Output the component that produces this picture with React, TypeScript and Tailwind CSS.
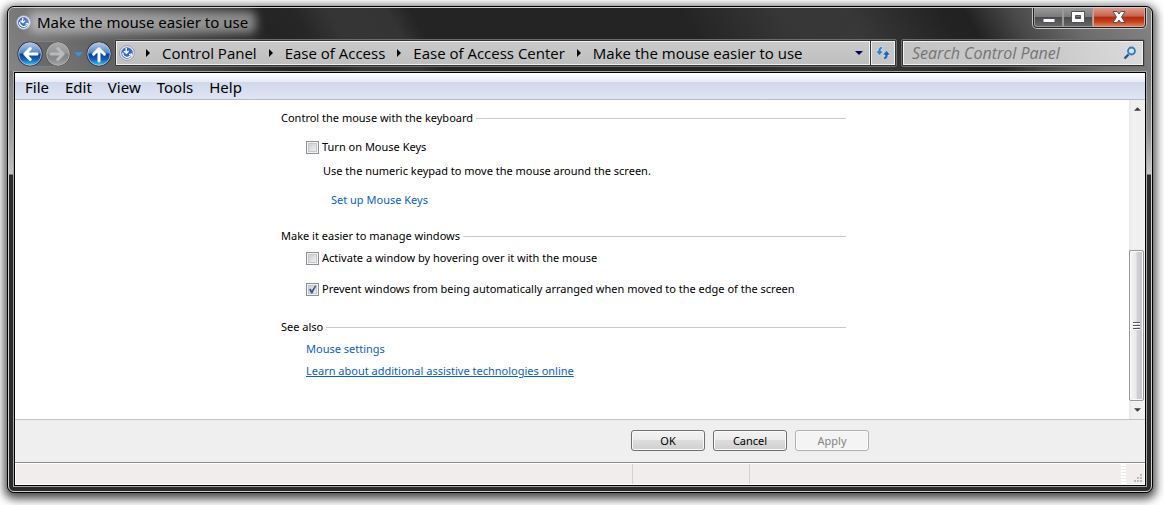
import React from "react";

const crumbs = ["Control Panel", "Ease of Access", "Ease of Access Center", "Make the mouse easier to use"];
const menus = ["File", "Edit", "View", "Tools", "Help"];

function EaseIcon({ className }: { className: string }) {
  return (
    <svg viewBox="0 0 16 16" className={className} aria-hidden="true">
      <circle cx="8" cy="8" r="7.4" fill="#e6eaf6" stroke="#8f9096" strokeWidth=".8" />
      <circle cx="8" cy="8" r="5.8" fill="#3a68d2" />
      <path d="M3.8 7.6a4.4 4.4 0 0 0 8 2.8" fill="none" stroke="#fff" strokeWidth="1.3" />
      <path d="M7.2 3v5M4.8 6l2.6 2.2L9.6 6" fill="none" stroke="#fff" strokeWidth="1.4" />
      <path d="M10 9.6l2.6-.6.3 2.4" fill="none" stroke="#fff" strokeWidth="1.2" />
    </svg>
  );
}

function Orb({ kind }: { kind: "back" | "forward" | "up" }) {
  const off = kind === "forward";
  const turn = kind === "back" ? "rotate(180 13 13)" : kind === "up" ? "rotate(-90 13 13)" : undefined;
  return (
    <svg viewBox="0 0 26 26" className="size-[26px]" aria-hidden="true">
      <defs>
        <linearGradient id={`orb-${kind}`} x1="0" y1="0" x2="0" y2="1">
          <stop offset="0" stopColor={off ? "#a8a9ab" : "#b4c9e8"} />
          <stop offset=".46" stopColor={off ? "#949698" : "#5285ca"} />
          <stop offset=".5" stopColor={off ? "#7f8183" : "#0b3f94"} />
          <stop offset=".75" stopColor={off ? "#8a8c8f" : "#1263c0"} />
          <stop offset="1" stopColor={off ? "#a5a6a8" : "#3fc4f5"} />
        </linearGradient>
      </defs>
      <circle cx="13" cy="13" r="12.5" fill={off ? "#5a5a5a" : "#2c3038"} />
      <circle cx="13" cy="13" r="11.3" fill={`url(#orb-${kind})`} stroke={off ? "#b4b5b6" : "#b9c6dc"} strokeWidth=".9" />
      <path
        transform={turn}
        d="M6 13h12M12.8 7.6l5.4 5.4-5.4 5.4"
        fill="none"
        stroke={off ? "#b9babb" : "#fff"}
        strokeWidth="3"
        strokeLinecap="round"
        strokeLinejoin="round"
      />
    </svg>
  );
}

function RightTri() {
  return (
    <svg viewBox="0 0 4 8" className="h-2 w-1 shrink-0" aria-hidden="true">
      <path d="M0 0l4 4-4 4z" fill="#000" />
    </svg>
  );
}

function DownTri({ fill, className }: { fill: string; className: string }) {
  return (
    <svg viewBox="0 0 8 4" className={className} aria-hidden="true">
      <path d="M0 0h8L4 4z" fill={fill} />
    </svg>
  );
}

function SectionTitle({ children }: { children: React.ReactNode }) {
  return (
    <h2 className="flex items-center gap-[3px]">
      {children}
      <span className="h-px flex-1 bg-[#cacaca]" />
    </h2>
  );
}

function Check({ id, label, checked }: { id: string; label: string; checked?: boolean }) {
  return (
    <div className="flex items-center gap-[3px] pl-[25px]">
      <span className="grid size-[13px]">
        <input
          id={id}
          type="checkbox"
          defaultChecked={checked}
          className="peer col-start-1 row-start-1 size-[13px] appearance-none border border-[#8e8f8f] bg-linear-to-br from-[#c4c8cd] to-[#f6f6f6] shadow-[inset_0_0_0_1px_#f4f4f4,inset_0_0_0_2px_#c3c6ca]"
        />
        <svg viewBox="0 0 13 13" className="pointer-events-none invisible col-start-1 row-start-1 size-[13px] peer-checked:visible" aria-hidden="true">
          <path d="M3 6.4l1.6-.8 1.2 2L9 2.4l1.3.5L6.4 10.6H5.3z" fill="#3f5596" />
        </svg>
      </span>
      <label htmlFor={id}>{label}</label>
    </div>
  );
}

function DialogButton({ label, disabled }: { label: string; disabled?: boolean }) {
  return (
    <button
      type="button"
      disabled={disabled}
      className="flex h-[21px] w-[74px] items-center justify-center rounded-[3px] border border-[#707070] bg-[linear-gradient(#f2f2f2,#ebebeb_50%,#dddddd_50%,#cfcfcf)] shadow-[inset_0_0_0_1px_#fafafa] disabled:border-[#adb2b5] disabled:bg-[#f4f4f4] disabled:bg-none disabled:text-[#838383]"
    >
      {label}
    </button>
  );
}

export default function App() {
  return (
    <div className="flex min-h-screen flex-col bg-white pt-[6px] pr-[11px] pb-[12px] pl-[7px] font-['Noto_Sans','Open_Sans',sans-serif] text-black">
      <div className="flex flex-1 flex-col rounded-[7px] border border-black bg-[#2b2b2b] shadow-[0_3px_10px_3px_rgba(0,0,0,0.7)]">
        <div className="flex flex-1 flex-col rounded-[6px] border border-[#cfcfcf] bg-[linear-gradient(#8d8d8d,#777_60px,#9a9a9a_120px,#c2c2c2_166px,transparent_167px),linear-gradient(#858585,#777_60px,#8d8d8d_120px,#c8c8c8_166px,transparent_167px)] bg-[length:4px_100%,4px_100%] bg-[position:left_top,right_top] bg-no-repeat">
          <header className="rounded-t-[5px] bg-[linear-gradient(60deg,#858585_0,#6f6f6f_6%,#555_12%,#343434_20%,#242424_24%,#262626_27%,#353535_30%,#343434_35%,#242424_37%,#242424_60%,#363636_68%,#383838_74%,#232323_82%,#222_84%,#484848_88%,#6c6c6c_93%,#858585_100%)] px-[4px]">
            <div className="flex h-[31px] items-start">
              <div className="flex h-[28px] flex-1 items-center gap-[6px] pl-[3px]">
                <EaseIcon className="size-[15px]" />
                <h1 className="relative isolate text-[15px] leading-[22px]">
                  <span className="absolute -inset-x-2 inset-y-0 -z-10 rounded-[6px] bg-white/45 blur-[5px]" />
                  Make the mouse easier to use
                </h1>
              </div>
              <div className="flex h-[21px] rounded-b-[5px] border border-t-0 border-[#c4c4c4] bg-[#222] px-px pb-px">
                <button type="button" aria-label="Minimize" className="flex w-[29px] items-center justify-center rounded-bl-[3px] border border-t-0 border-[#9a9a9a] bg-[linear-gradient(#999,#7b7b7b_48%,#4a4a4a_50%,#666)]">
                  <svg viewBox="0 0 14 12" className="h-3 w-[14px] shrink-0" aria-hidden="true">
                    <rect x="1" y="7.5" width="12" height="4" fill="#fff" stroke="#51535c" />
                  </svg>
                </button>
                <button type="button" aria-label="Restore" className="flex w-[30px] items-center justify-center border border-t-0 border-[#9a9a9a] bg-[linear-gradient(#999,#7b7b7b_48%,#4a4a4a_50%,#666)]">
                  <svg viewBox="0 0 14 12" className="h-3 w-[14px] shrink-0" aria-hidden="true">
                    <path fillRule="evenodd" d="M.5.5h13v11H.5zM4.500 4.500h5v3h-5z" fill="#fff" stroke="#51535c" />
                  </svg>
                </button>
                <button type="button" aria-label="Close" className="flex w-[52px] items-center justify-center rounded-br-[3px] border border-t-0 border-[#d6a398] bg-[linear-gradient(#dd9c8c,#c8604b_46%,#b02a12_50%,#c2401c_75%,#dd7a52)]">
                  <svg viewBox="0 0 14 12" className="h-3 w-[14px] shrink-0" aria-hidden="true">
                    <path d="M1 .5h4.200L7 3 8.800.5H13L9.500 6l3.500 5.500H8.800L7 9l-1.800 2.500H1L4.500 6z" fill="#fff" stroke="#51535c" />
                  </svg>
                </button>
              </div>
            </div>

            <div className="flex h-[32px] items-start gap-[4px] pr-[2px]">
              <div className="flex h-[30px] items-center pl-[4px]">
                <div className="flex h-[26px] gap-[2px] rounded-full border-y border-[#8a8a8a]/70 bg-[#606060]/60">
                  <button type="button" aria-label="Back" className="-my-px"><Orb kind="back" /></button>
                  <button type="button" aria-label="Forward" className="-my-px"><Orb kind="forward" /></button>
                </div>
                <button type="button" aria-label="Recent pages" className="mx-[3px]">
                  <DownTri fill="#3a93dd" className="h-[5px] w-[9px]" />
                </button>
                <button type="button" aria-label="Up"><Orb kind="up" /></button>
              </div>

              <div className="-ml-[2px] flex h-[28px] flex-1 rounded-[2px] border border-[#6c6c6c] bg-[#333] p-px">
                <div className="flex flex-1 items-center border border-[#f0f0f0] bg-linear-to-b from-[#c9c9c9] to-[#bfbfbf] pl-[2px] font-['Open_Sans','Noto_Sans',sans-serif] text-[15px] leading-5">
                  <EaseIcon className="mr-[11px] size-4" />
                  <nav aria-label="Address" className="flex flex-1 items-center gap-[12px]">
                    {crumbs.map((c) => (
                      <span key={c} className="flex items-center gap-[12px]">
                        <RightTri />
                        <button type="button" className="whitespace-nowrap">{c}</button>
                      </span>
                    ))}
                  </nav>
                  <button type="button" aria-label="Previous locations" className="px-[6px]">
                    <DownTri fill="#000060" className="h-1 w-2" />
                  </button>
                </div>
                <button type="button" aria-label="Refresh" className="ml-px flex w-[24px] items-center justify-center border border-[#f0f0f0] bg-[#c6c6c6]">
                  <svg viewBox="0 0 16 14" className="h-[14px] w-4 shrink-0" aria-hidden="true">
                    <path d="M7.500.5C4.500.5 3 2 3 5H.5l4 4.500 4-4.500H6c0-1.600.3-2.500 1.500-2.500z" fill="#3583cf" stroke="#f5f9ff" strokeWidth=".5" />
                    <path d="M8.500 13.500c3 0 4.500-1.500 4.500-4.500h2.500l-4-4.500-4 4.500H10c0 1.600-.3 2.500-1.500 2.500z" fill="#1f63b8" stroke="#f5f9ff" strokeWidth=".5" />
                  </svg>
                </button>
              </div>

              <div className="flex h-[28px] w-[244px] rounded-[2px] border border-[#6c6c6c] bg-[#333] p-px">
                <div className="flex flex-1 items-center border border-[#f0f0f0] bg-[linear-gradient(70deg,#c4c4c4,#c9c9c9_60%,#dcdcdc)] pr-[5px] pl-[8px]">
                  <input
                    type="text"
                    aria-label="Search Control Panel"
                    placeholder="Search Control Panel"
                    className="min-w-0 flex-1 bg-transparent font-['Open_Sans','Noto_Sans',sans-serif] text-[16px] leading-5 italic outline-none placeholder:text-[#747474]"
                  />
                  <svg viewBox="0 0 14 14" className="size-[14px]" aria-hidden="true">
                    <path d="M1.500 12.500l4-4" stroke="#244f9e" strokeWidth="2.400" />
                    <circle cx="8.500" cy="5" r="3.500" fill="#d5e4f2" stroke="#2d7cc9" strokeWidth="1.800" />
                  </svg>
                </div>
              </div>
            </div>
          </header>

          <div className="flex flex-1 flex-col px-[4px] pb-[4px]">
            <div className="flex flex-1 flex-col border border-[#a5a5a5]">
              <div className="flex flex-1 flex-col border border-black">
                <nav aria-label="Menu" className="flex h-[27px] items-center gap-[16px] border-b border-[#b6bccc] bg-[linear-gradient(#fff,#e6eaf5_9px,#d1d8eb_9px,#dfe5f4)] pt-px pl-[10px] text-[15px] leading-5">
                  {menus.map((m) => (
                    <button key={m} type="button">{m}</button>
                  ))}
                </nav>

                <div className="flex flex-1 bg-white">
                  <main className="flex-1 pt-[10px] pb-[40px] pl-[266px] text-[11px] leading-4">
                    <div className="max-w-[565px]">
                      <SectionTitle>Control the mouse with the keyboard</SectionTitle>
                      <div className="mt-[13px]"><Check id="mouse-keys" label="Turn on Mouse Keys" /></div>
                      <p className="mt-2 pl-[42px]">Use the numeric keypad to move the mouse around the screen.</p>
                      <p className="mt-[13px] pl-[50px]"><a href="#setup" className="text-[#0b60c8]">Set up Mouse Keys</a></p>
                      <div className="mt-5"><SectionTitle>Make it easier to manage windows</SectionTitle></div>
                      <div className="mt-[6px]"><Check id="hover" label="Activate a window by hovering over it with the mouse" /></div>
                      <div className="mt-[15px]"><Check id="arrange" label="Prevent windows from being automatically arranged when moved to the edge of the screen" checked /></div>
                      <div className="mt-[22px]"><SectionTitle>See also</SectionTitle></div>
                      <p className="mt-[6px] pl-[25px]"><a href="#mouse" className="text-[#0b60c8]">Mouse settings</a></p>
                      <p className="mt-[6px] pl-[25px]"><a href="#learn" className="text-[#0b60c8] underline">Learn about additional assistive technologies online</a></p>
                    </div>
                  </main>
                  <div className="flex w-4 flex-col bg-[linear-gradient(90deg,#e6e6e6,#f1f1f1_3px,#efefef)]">
                    <button type="button" aria-label="Scroll up" className="flex h-[17px] items-center justify-center">
                      <DownTri fill="#3c3c3c" className="h-1 w-[7px] rotate-180" />
                    </button>
                    <div className="flex flex-1 flex-col justify-end">
                      <div className="mr-px flex h-[53%] flex-col items-center justify-center gap-px rounded-[2px] border border-[#979797] bg-[linear-gradient(90deg,#f5f5f5,#e9e9eb_45%,#d2d3d6_55%,#c2c3c8)] shadow-[inset_0_0_0_1px_#fafafa]">
                        <span className="h-[2px] w-[7px] border-t border-[#555] bg-white" />
                        <span className="h-[2px] w-[7px] border-t border-[#555] bg-white" />
                        <span className="h-[2px] w-[7px] border-t border-[#555] bg-white" />
                      </div>
                    </div>
                    <button type="button" aria-label="Scroll down" className="flex h-[18px] items-center justify-center">
                      <DownTri fill="#3c3c3c" className="h-1 w-[7px]" />
                    </button>
                  </div>
                </div>

                <div className="flex gap-2 border-t border-[#c3c3c3] bg-[#efefef] pt-[10px] pb-[11px] pl-[616px] text-[11px] leading-4">
                  <DialogButton label="OK" />
                  <DialogButton label="Cancel" />
                  <DialogButton label="Apply" disabled />
                </div>

                <footer className="border-t border-[#8c8c8c] bg-white p-px">
                  <div className="flex h-5 bg-[#f0edec]">
                    <div className="w-[617px] border-r border-[#d2d2d2]" />
                    <div className="w-[117px] border-r border-[#d2d2d2]" />
                    <div className="flex-1" />
                    <div className="mr-[8px] w-[5px] bg-[repeating-linear-gradient(#fff_0_2px,#ebe8e7_2px_3px)]" />
                    <svg viewBox="0 0 10 10" className="size-[10px] self-end" aria-hidden="true">
                      <path d="M6 0h2v2H6zM6 3h2v2H6zM3 3h2v2H3zM6 6h2v2H6zM3 6h2v2H3zM0 6h2v2H0z" fill="#bdb9b7" />
                    </svg>
                  </div>
                </footer>
              </div>
            </div>
          </div>
        </div>
      </div>
    </div>
  );
}
